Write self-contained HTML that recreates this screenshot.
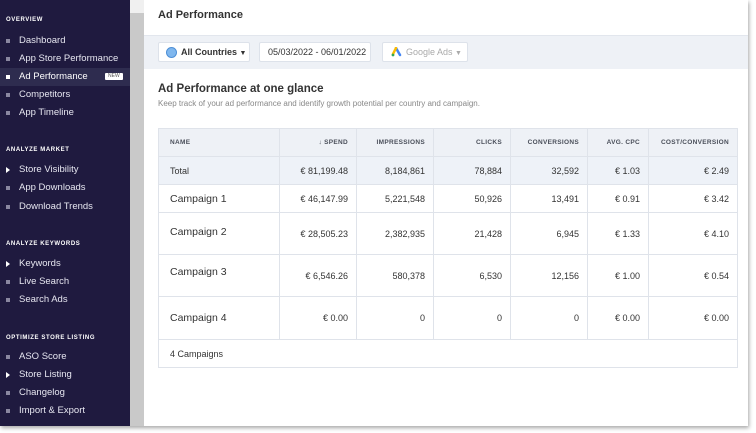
<!DOCTYPE html>
<html><head><meta charset="utf-8"><style>
*{margin:0;padding:0;box-sizing:border-box}
body{width:756px;height:433px;background:#fff;font-family:"Liberation Sans",sans-serif;position:relative;overflow:hidden}
#frame{position:absolute;left:0;top:0;width:748px;height:426px;box-shadow:1px 2px 4px rgba(0,0,0,.35);background:#fff;overflow:hidden}
#side{position:absolute;left:0;top:0;width:130px;height:426px;background:#1f1a3f;color:#e6e6f0}
.h{position:absolute;left:6px;font-size:6px;font-weight:bold;letter-spacing:.6px;color:#fff}
.it{position:absolute;left:0;width:130px;height:18px;font-size:9.5px;line-height:18px;padding-left:19px}
.it:before{content:"";position:absolute;left:6px;top:7px;width:4px;height:4px;background:#8a87a0}
.it.ar:before{width:0;height:0;background:none;border-left:4px solid #fff;border-top:3px solid transparent;border-bottom:3px solid transparent;top:6px}
.it.act{background:#2e2c4f;color:#fff}
.it.act:before{background:#fff}
.new{position:absolute;left:105px;top:5px;font-size:5px;line-height:7px;background:#fff;color:#555;padding:0 3px;border-radius:1px}
#sb{position:absolute;left:130px;top:0;width:14px;height:426px;background:#c9c9c9}
#sbt{position:absolute;left:130px;top:0;width:14px;height:13px;background:#f0f0f0}
#main{position:absolute;left:144px;top:0;width:604px;height:426px}
.t{position:absolute;color:#333;white-space:nowrap}
#fb{position:absolute;left:0;top:35px;width:604px;height:34px;background:#eef1f6;border-top:1px solid #e2e6ed}
.btn{position:absolute;top:6px;height:20px;background:#fff;border:1px solid #dde2ea;border-radius:2px;font-size:9px;line-height:18px;color:#333;padding-left:8px}
table{position:absolute;left:14px;top:128px;width:580px;border-collapse:collapse;font-size:9px;color:#333}
td,th{border:1px solid #dfe3ea;text-align:right;padding:0 8px}
th{font-size:6.5px;color:#4a4f5a;font-weight:bold;letter-spacing:.3px;background:#eef1f6;height:28px}
td:first-child,th:first-child{text-align:left;padding-left:11px}
.tot td{background:#eef2f8;height:28px}
.nm{font-size:10.5px}
</style></head><body>
<div id="frame">
<div id="side">
<div class="h" style="top:17px">OVERVIEW</div>
<div class="it" style="top:32px">Dashboard</div>
<div class="it" style="top:50px">App Store Performance</div>
<div class="it act" style="top:68px">Ad Performance<span class="new">NEW</span></div>
<div class="it" style="top:86px">Competitors</div>
<div class="it" style="top:104px">App Timeline</div>
<div class="h" style="top:147px">ANALYZE MARKET</div>
<div class="it ar" style="top:161px">Store Visibility</div>
<div class="it" style="top:179px">App Downloads</div>
<div class="it" style="top:198px">Download Trends</div>
<div class="h" style="top:241px">ANALYZE KEYWORDS</div>
<div class="it ar" style="top:255px">Keywords</div>
<div class="it" style="top:273px">Live Search</div>
<div class="it" style="top:291px">Search Ads</div>
<div class="h" style="top:335px">OPTIMIZE STORE LISTING</div>
<div class="it" style="top:348px">ASO Score</div>
<div class="it ar" style="top:366px">Store Listing</div>
<div class="it" style="top:384px">Changelog</div>
<div class="it" style="top:402px">Import &amp; Export</div>
</div>
<div id="sb"></div><div id="sbt"></div>
<div id="main">
<div class="t" style="left:14px;top:9px;font-size:11px;font-weight:bold;color:#333">Ad Performance</div>
<div id="fb">
<div class="btn" style="left:14px;width:92px;padding-left:22px;font-weight:bold"><span style="position:absolute;left:7px;top:4px;width:11px;height:11px;border-radius:50%;background:#7fb7ee;border:1px solid #4d8fd6"></span>All Countries <span style="font-size:7px">▼</span></div>
<div class="btn" style="left:115px;width:112px">05/03/2022 - 06/01/2022</div>
<div class="btn" style="left:238px;width:86px;padding-left:23px;color:#aaa"><svg style="position:absolute;left:8px;top:4px" width="11" height="10" viewBox="0 0 11 10"><path d="M5 1 L9 8" stroke="#4285f4" stroke-width="2.5" stroke-linecap="round"/><path d="M5 1 L2 7" stroke="#fbbc04" stroke-width="2.5" stroke-linecap="round"/><circle cx="2" cy="8" r="1.4" fill="#34a853"/></svg>Google Ads <span style="font-size:7px">▼</span></div>
</div>
<div class="t" style="left:14px;top:83px;font-size:11.5px;font-weight:bold;color:#333">Ad Performance at one glance</div>
<div class="t" style="left:14px;top:99px;font-size:8px;color:#888">Keep track of your ad performance and identify growth potential per country and campaign.</div>
<table>
<tr><th style="width:121px">NAME</th><th style="width:77px">↓ SPEND</th><th style="width:77px">IMPRESSIONS</th><th style="width:77px">CLICKS</th><th style="width:77px">CONVERSIONS</th><th style="width:61px">AVG. CPC</th><th>COST/CONVERSION</th></tr>
<tr class="tot"><td>Total</td><td>€ 81,199.48</td><td>8,184,861</td><td>78,884</td><td>32,592</td><td>€ 1.03</td><td>€ 2.49</td></tr>
<tr style="height:28px"><td class="nm">Campaign 1</td><td>€ 46,147.99</td><td>5,221,548</td><td>50,926</td><td>13,491</td><td>€ 0.91</td><td>€ 3.42</td></tr>
<tr style="height:42px"><td class="nm" style="vertical-align:top;padding-top:13px">Campaign 2</td><td>€ 28,505.23</td><td>2,382,935</td><td>21,428</td><td>6,945</td><td>€ 1.33</td><td>€ 4.10</td></tr>
<tr style="height:42px"><td class="nm" style="vertical-align:top;padding-top:11px">Campaign 3</td><td>€ 6,546.26</td><td>580,378</td><td>6,530</td><td>12,156</td><td>€ 1.00</td><td>€ 0.54</td></tr>
<tr style="height:43px"><td class="nm">Campaign 4</td><td>€ 0.00</td><td>0</td><td>0</td><td>0</td><td>€ 0.00</td><td>€ 0.00</td></tr>
<tr style="height:28px"><td colspan="7" style="text-align:left">4 Campaigns</td></tr>
</table>
</div>
</div>
</body></html>
